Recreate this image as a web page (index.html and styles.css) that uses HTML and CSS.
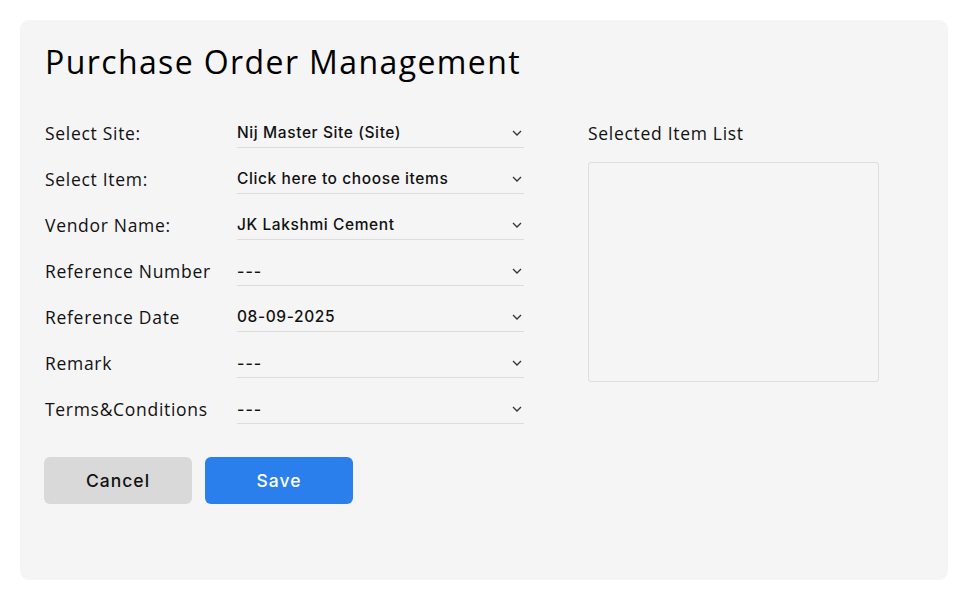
FILE: index.html
```html
<!DOCTYPE html>
<html>
<head>
<meta charset="utf-8">
<link rel="stylesheet" href="styles.css">
</head>
<body>
<div class="card">
  <h1 class="title">Purchase Order Management</h1>
  <div class="content">
    <div class="form">
      <div class="row"><div class="label">Select Site:</div><div class="field"><span class="value">Nij Master Site (Site)</span><svg class="chev" viewBox="0 0 10 6"><path d="M1 1l4 4 4-4"/></svg></div></div>
      <div class="row"><div class="label">Select Item:</div><div class="field"><span class="value">Click here to choose items</span><svg class="chev" viewBox="0 0 10 6"><path d="M1 1l4 4 4-4"/></svg></div></div>
      <div class="row"><div class="label">Vendor Name:</div><div class="field"><span class="value">JK Lakshmi Cement</span><svg class="chev" viewBox="0 0 10 6"><path d="M1 1l4 4 4-4"/></svg></div></div>
      <div class="row"><div class="label">Reference Number</div><div class="field"><span class="value dash">---</span><svg class="chev" viewBox="0 0 10 6"><path d="M1 1l4 4 4-4"/></svg></div></div>
      <div class="row"><div class="label">Reference Date</div><div class="field"><span class="value">08-09-2025</span><svg class="chev" viewBox="0 0 10 6"><path d="M1 1l4 4 4-4"/></svg></div></div>
      <div class="row"><div class="label">Remark</div><div class="field"><span class="value dash">---</span><svg class="chev" viewBox="0 0 10 6"><path d="M1 1l4 4 4-4"/></svg></div></div>
      <div class="row"><div class="label">Terms&amp;Conditions</div><div class="field"><span class="value dash">---</span><svg class="chev" viewBox="0 0 10 6"><path d="M1 1l4 4 4-4"/></svg></div></div>
      <div class="actions">
        <button class="btn btn-cancel">Cancel</button>
        <button class="btn btn-save">Save</button>
      </div>
    </div>
    <div class="side">
      <div class="side-title">Selected Item List</div>
      <div class="list-box"></div>
    </div>
  </div>
</div>
</body>
</html>
```
FILE: styles.css
```css
* { box-sizing: border-box; }
html, body { margin: 0; padding: 0; background: #ffffff; }
body {
  font-family: "Open Sans", "Noto Sans", "Liberation Sans", sans-serif;
  color: #111;
  padding: 20px 22px 21px 20px;
}
.card {
  background: #f5f5f5;
  border-radius: 9px;
  height: 560px;
  padding: 22px 24px 0 25px;
}
.title {
  margin: 0;
  font-size: 32px;
  font-weight: 400;
  line-height: 40px;
  color: #000;
  letter-spacing: 1.4px;
}
.content {
  display: flex;
  margin-top: 38px;
}
.form {
  width: 479px;
}
.row {
  display: flex;
  align-items: stretch;
  height: 46px;
}
.label {
  width: 192px;
  font-size: 17.5px;
  line-height: 24px;
  padding-top: 1px;
  color: #111;
  letter-spacing: 0.7px;
}
.field {
  width: 287px;
  height: 28px;
  border-bottom: 1px solid #dcdcdc;
  display: flex;
  align-items: center;
  justify-content: space-between;
  padding-right: 2px;
}
.value {
  font-family: Inter, "Open Sans", sans-serif;
  font-size: 15.5px;
  font-weight: 500;
  color: #111;
  margin-top: -2px;
  letter-spacing: 0.6px;
}
.value.dash {
  letter-spacing: 1px;
  font-size: 16px;
}
.chev {
  width: 10px;
  height: 6px;
  fill: none;
  stroke: #333;
  stroke-width: 1.3;
  margin-top: -2px;
}
.actions {
  display: flex;
  gap: 13px;
  margin-top: 15px;
  margin-left: -1px;
}
.btn {
  width: 148px;
  height: 47px;
  border: none;
  border-radius: 6px;
  font-family: Inter, "Open Sans", sans-serif;
  font-size: 17.5px;
  font-weight: 500;
  letter-spacing: 1px;
}
.btn-cancel { background: #d9d9d9; color: #111; }
.btn-save { background: #2a7fec; color: #fff; }
.side {
  margin-left: 64px;
}
.side-title {
  font-size: 17.5px;
  line-height: 24px;
  padding-top: 1px;
  color: #111;
  letter-spacing: 0.7px;
}
.list-box {
  margin-top: 17px;
  width: 291px;
  height: 220px;
  border: 1.5px solid #dedede;
  border-radius: 3px;
}
```
